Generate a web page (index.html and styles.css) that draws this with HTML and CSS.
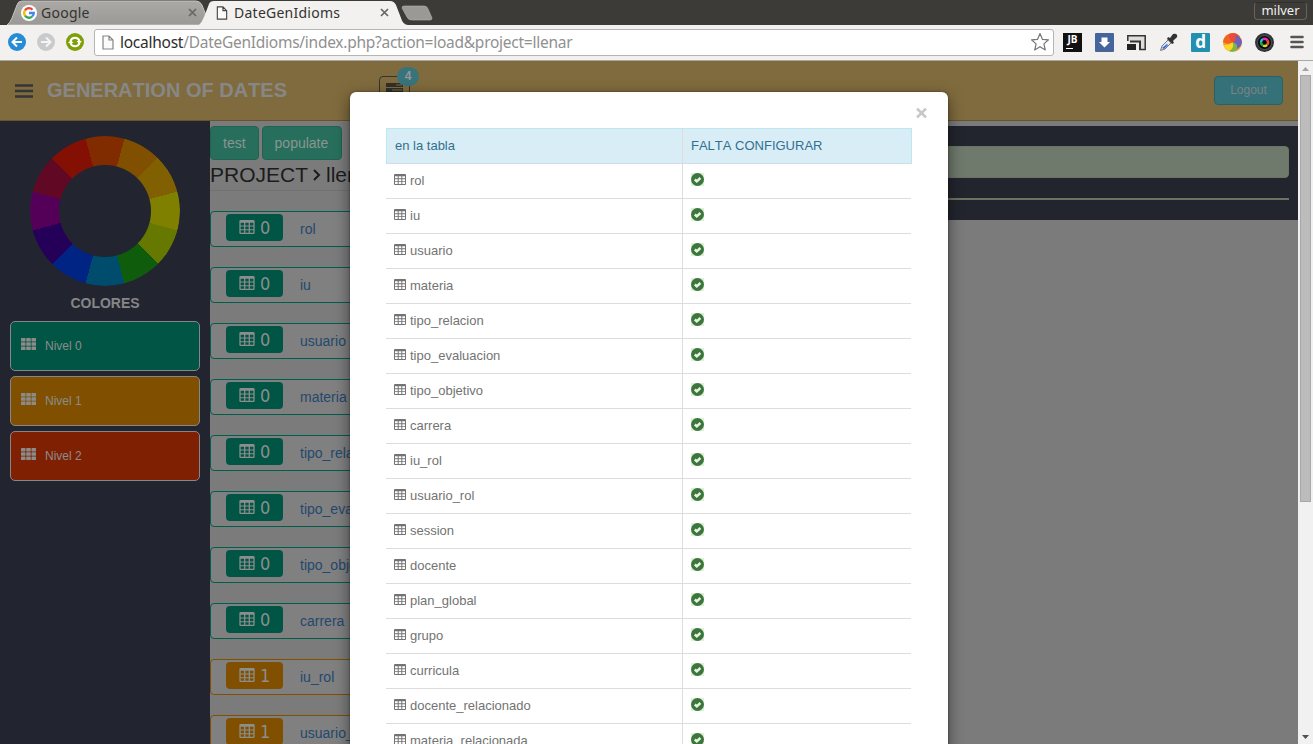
FILE: index.html
```html
<!DOCTYPE html>
<html lang="es">
<head>
<meta charset="utf-8">
<title>DateGenIdioms</title>
<link rel="stylesheet" href="styles.css">
</head>
<body>
<svg class="defs" aria-hidden="true">
  <symbol id="table" viewBox="0 0 12 11"><path fill="currentColor" fill-rule="evenodd" d="M1 0H11Q12 0 12 1V10Q12 11 11 11H1Q0 11 0 10V1Q0 0 1 0ZM1 2.200V4.300H3.700V2.200ZM4.700 2.200V4.300H7.300V2.200ZM8.300 2.200V4.300H11V2.200ZM1 5.200V7.200H3.700V5.200ZM4.700 5.200V7.200H7.300V5.200ZM8.300 5.200V7.200H11V5.200ZM1 8.100V10.100H3.700V8.100ZM4.700 8.100V10.100H7.300V8.100ZM8.300 8.100V10.100H11V8.100Z"/></symbol>
  <symbol id="grid" viewBox="0 0 15 12"><path fill="currentColor" d="M.6 0H4Q4.500 0 4.500.6V2.900Q4.500 3.500 4 3.500H.6Q0 3.500 0 2.900V.6Q0 0 .6 0ZM5.800 0H9.200Q9.800 0 9.800.6V2.900Q9.800 3.500 9.200 3.500H5.800Q5.200 3.500 5.200 2.900V.6Q5.200 0 5.800 0ZM11 0H14.400Q15 0 15 .6V2.900Q15 3.500 14.400 3.500H11Q10.500 3.500 10.500 2.900V.6Q10.500 0 11 0ZM.6 4.200H4Q4.500 4.200 4.500 4.800V7.200Q4.500 7.800 4 7.800H.6Q0 7.800 0 7.200V4.800Q0 4.200.6 4.200ZM5.800 4.200H9.200Q9.800 4.200 9.800 4.800V7.200Q9.800 7.800 9.200 7.800H5.800Q5.200 7.800 5.200 7.200V4.800Q5.200 4.200 5.800 4.200ZM11 4.200H14.400Q15 4.200 15 4.800V7.200Q15 7.800 14.400 7.800H11Q10.500 7.800 10.500 7.200V4.800Q10.500 4.200 11 4.200ZM.6 8.500H4Q4.500 8.500 4.500 9.100V11.400Q4.500 12 4 12H.6Q0 12 0 11.400V9.100Q0 8.500.6 8.500ZM5.800 8.500H9.200Q9.800 8.500 9.800 9.100V11.400Q9.800 12 9.200 12H5.800Q5.200 12 5.200 11.400V9.100Q5.200 8.500 5.800 8.500ZM11 8.500H14.400Q15 8.500 15 9.100V11.400Q15 12 14.400 12H11Q10.500 12 10.500 11.400V9.100Q10.500 8.500 11 8.500Z"/></symbol>
  <symbol id="check" viewBox="0 0 13 13"><path fill="#dff0d8" d="M0 0H13V13H0Z"/><circle cx="6.500" cy="6.500" r="6.500" fill="#3c763d"/><path d="M3.800 6.500L5.800 8.300L9.400 5" fill="none" stroke="#e6f3e1" stroke-width="2.500"/></symbol>
  <symbol id="file" viewBox="0 0 12 15"><path d="M1 1H7L11 5V14H1Z M7 1V5H11" fill="#fbfbfb" stroke="currentColor" stroke-width="1.200"/></symbol>
  <symbol id="close" viewBox="0 0 9 9"><path d="M1 1L8 8M8 1L1 8" stroke="currentColor" stroke-width="1.700"/></symbol>
</svg>
<div class="tabs">
  <svg class="tab-shapes" viewBox="0 0 440 25">
    <defs><linearGradient id="tg" x2="0" y2="1"><stop stop-color="#aaa9a6"/><stop offset="1" stop-color="#9b9996"/></linearGradient></defs>
    <path d="M7 25Q10 23 12 18L17 5Q18 1 22 1H196Q200 1 202 5L207 18Q209 24 214 25Z" fill="url(#tg)" stroke="#c5c3be"/>
    <path d="M199 25Q202 22 204 17L209 4Q210 1 214 1H390Q394 1 396 5L401 18Q403 25 408 25Z" fill="#f2f1f0"/>
    <path d="M404 6H424Q427 6 428 9L432 18Q432 20 430 20H412Q408 20 407 17L402 8Q402 6 404 6Z" fill="#9b9996" stroke="#b9b7b3" stroke-width=".6"/>
  </svg>
  <div class="tab tab-google">
    <svg class="favicon" viewBox="0 0 16 16"><circle cx="8" cy="8" r="8" fill="#fff"/><g fill="none" stroke-width="2.300"><path d="M4 5.300A4.800 4.800 0 0 1 11.500 4.700" stroke="#ea4335"/><path d="M4 5.300A4.800 4.800 0 0 0 4 10.700" stroke="#fbbc05"/><path d="M4 10.700A4.800 4.800 0 0 0 11.200 11.500" stroke="#34a853"/><path d="M11.200 11.500A4.800 4.800 0 0 0 12.800 8H8" stroke="#4285f4"/></g></svg>
    <span>Google</span><svg class="tab-x"><use href="#close"/></svg>
  </div>
  <div class="tab tab-active"><svg class="tab-file"><use href="#file"/></svg><span>DateGenIdioms</span><svg class="tab-x"><use href="#close"/></svg></div>
  <div class="user">milver</div>
</div>
<div class="toolbar">
  <svg class="nav" viewBox="0 0 18 18"><circle cx="9" cy="9" r="9" fill="#258cd6"/><path d="M14 9H5M9 4.500L4.500 9L9 13.500" fill="none" stroke="#fff" stroke-width="2"/></svg>
  <svg class="nav" viewBox="0 0 18 18"><circle cx="9" cy="9" r="9" fill="#c9cacb"/><path d="M4 9H13M9 4.500L13.500 9L9 13.500" fill="none" stroke="#f4f4f4" stroke-width="2"/></svg>
  <svg class="nav" viewBox="0 0 18 18"><circle cx="9" cy="9" r="9" fill="#7f9f08"/><path d="M4.500 8A4.700 4.700 0 0 1 13.500 8M4.500 10A4.700 4.700 0 0 0 13.500 10" fill="none" stroke="#fff" stroke-width="2"/><path d="M10.500 8H16L13.300 11ZM2 10H7.500L4.700 7Z" fill="#fff"/></svg>
  <div class="address"><svg class="url-file"><use href="#file"/></svg><span class="url"><b>localhost</b>/DateGenIdioms/index.php?action=load&amp;project=llenar</span>
    <svg class="star" viewBox="0 0 20 20"><path d="M10 1.500L12.400 7.300L18.500 7.800L13.900 11.900L15.300 18L10 14.700L4.700 18L6.100 11.900L1.500 7.800L7.600 7.300Z" fill="#fff" stroke="#777" stroke-width="1.200" stroke-linejoin="round"/></svg>
  </div>
  <div class="extensions">
    <div class="jb">JB<i></i></div>
    <svg viewBox="0 0 19 19"><rect width="19" height="19" rx="1" fill="#46659d"/><path d="M6.500 4.500H12.500V9H15L9.500 14.500L4 9H6.500Z" fill="#fff"/></svg>
    <svg viewBox="0 0 19 19"><path d="M.8 8V2.800H18.200V16.500H12" fill="#ddd" stroke="#333" stroke-width="1.500"/><path d="M1 8H14V16H1Z" fill="#eee"/><path d="M3 7.500H14V16H12V9.500H3Z" fill="#333"/><rect y="11" width="9" height="6" fill="#222"/></svg>
    <svg viewBox="0 0 19 19"><path d="M1.500 17.500L3 13L10 6L13 9L6 16Z" fill="#dce8f4" stroke="#777"/><path d="M3 15L8 11L9 12L5 16Z" fill="#3268e0"/><path d="M9 4L11 5L14 1Q17 0 18 2Q19 4 16 6L14 8L15 10L13 11L8 6Z" fill="#333"/></svg>
    <div class="letter-d">d</div>
    <svg viewBox="0 0 19 19"><circle cx="9.500" cy="9.500" r="9.500" fill="#f79a1c"/><path d="M9.500 9.500Q5 7 6 1Q13-2 17 4Q15 9 9.500 9.500Z" fill="#ee4a35"/><path d="M0 9Q1 3 6 1Q5 7 9.500 9.500Q5 12 0 9Z" fill="#ee6422"/><path d="M12 2Q19 4 19 9.500Q18 14 14 16Q15 11 10 9.500Q14 8 12 2Z" fill="#6b62ba"/><path d="M9.500 9.500Q15 10 14 17Q10 19.500 6 18Q11 15 9.500 9.500Z" fill="#77b84a"/><path d="M1 12Q6 12 9.500 9.500Q12 15 6 18Q2 17 1 12Z" fill="#fbd724"/></svg>
    <svg viewBox="0 0 19 19"><circle cx="9.500" cy="9.500" r="9.500" fill="#303438"/><circle cx="9.500" cy="9.500" r="7" fill="#05070b" stroke="#687078" stroke-width=".7"/><g fill="none" stroke-width="2.500"><path d="M6 9A3.700 3.700 0 0 1 8 6" stroke="#23c4e8"/><path d="M8 6A3.700 3.700 0 0 1 12.500 7.500" stroke="#e72bb0"/><path d="M12.500 7.500A3.700 3.700 0 0 1 12 12" stroke="#ef532b"/><path d="M12 12A3.700 3.700 0 0 1 8 12.500" stroke="#d9df20"/><path d="M8 12.500A3.700 3.700 0 0 1 6 9" stroke="#20a747"/></g></svg>
    <svg class="menu" viewBox="0 0 14 14"><path d="M1.500 2H12.500M1.500 7H12.500M1.500 12H12.500" stroke="#555" stroke-width="2.600" stroke-linecap="round"/></svg>
  </div>
</div>
<div class="viewport">
  <div class="page">
    <header class="header">
      <svg class="burger" viewBox="0 0 18 14"><path d="M0 1.500H18M0 7H18M0 12.500H18" stroke="#333638" stroke-width="2.700"/></svg>
      <div class="brand">GENERATION OF DATES</div>
      <div class="tasks"><svg viewBox="0 0 17 14"><path d="M0 0H17V4H0ZM0 5H17V9H0ZM0 10H17V14H0Z" fill="#30302a"/><path d="M10 2H16M6 7H16M12 12H16" stroke="#806b3e"/></svg><span>4</span></div>
      <div class="logout">Logout</div>
    </header>
    <div class="body">
      <aside class="sidebar">
        <div class="wheel"></div>
        <div class="wheel-title">COLORES</div>
        <div class="level green"><svg><use href="#grid"/></svg>Nivel 0</div>
        <div class="level amber"><svg><use href="#grid"/></svg>Nivel 1</div>
        <div class="level red"><svg><use href="#grid"/></svg>Nivel 2</div>
      </aside>
      <main class="main">
        <section class="project">
          <div class="actions"><div class="action">test</div><div class="action populate">populate</div></div>
          <div class="project-title">PROJECT <svg viewBox="0 0 8 12"><path d="M1 1L6 6L1 11" fill="none" stroke="currentColor" stroke-width="2"/></svg> llenar</div>
          <div class="entity"><div class="badge"><svg><use href="#table"/></svg>0</div>rol</div>
          <div class="entity"><div class="badge"><svg><use href="#table"/></svg>0</div>iu</div>
          <div class="entity"><div class="badge"><svg><use href="#table"/></svg>0</div>usuario</div>
          <div class="entity"><div class="badge"><svg><use href="#table"/></svg>0</div>materia</div>
          <div class="entity"><div class="badge"><svg><use href="#table"/></svg>0</div>tipo_relacion</div>
          <div class="entity"><div class="badge"><svg><use href="#table"/></svg>0</div>tipo_evaluacion</div>
          <div class="entity"><div class="badge"><svg><use href="#table"/></svg>0</div>tipo_objetivo</div>
          <div class="entity"><div class="badge"><svg><use href="#table"/></svg>0</div>carrera</div>
          <div class="entity one"><div class="badge"><svg><use href="#table"/></svg>1</div>iu_rol</div>
          <div class="entity one"><div class="badge"><svg><use href="#table"/></svg>1</div>usuario_rol</div>
        </section>
        <section class="result"><div class="alert"></div><div class="rule"></div></section>
      </main>
    </div>
    <div class="modal">
      <div class="modal-head"><svg viewBox="0 0 11 10"><path d="M1 .5L10 9.500M10 .5L1 9.500" stroke="#c8c8c8" stroke-width="2.600"/></svg></div>
      <div class="grid">
        <div class="row head"><div>en la tabla</div><div>FALTA CONFIGURAR</div></div>
        <div class="row"><div><svg class="ti"><use href="#table"/></svg>rol</div><div><svg class="ck"><use href="#check"/></svg></div></div>
        <div class="row"><div><svg class="ti"><use href="#table"/></svg>iu</div><div><svg class="ck"><use href="#check"/></svg></div></div>
        <div class="row"><div><svg class="ti"><use href="#table"/></svg>usuario</div><div><svg class="ck"><use href="#check"/></svg></div></div>
        <div class="row"><div><svg class="ti"><use href="#table"/></svg>materia</div><div><svg class="ck"><use href="#check"/></svg></div></div>
        <div class="row"><div><svg class="ti"><use href="#table"/></svg>tipo_relacion</div><div><svg class="ck"><use href="#check"/></svg></div></div>
        <div class="row"><div><svg class="ti"><use href="#table"/></svg>tipo_evaluacion</div><div><svg class="ck"><use href="#check"/></svg></div></div>
        <div class="row"><div><svg class="ti"><use href="#table"/></svg>tipo_objetivo</div><div><svg class="ck"><use href="#check"/></svg></div></div>
        <div class="row"><div><svg class="ti"><use href="#table"/></svg>carrera</div><div><svg class="ck"><use href="#check"/></svg></div></div>
        <div class="row"><div><svg class="ti"><use href="#table"/></svg>iu_rol</div><div><svg class="ck"><use href="#check"/></svg></div></div>
        <div class="row"><div><svg class="ti"><use href="#table"/></svg>usuario_rol</div><div><svg class="ck"><use href="#check"/></svg></div></div>
        <div class="row"><div><svg class="ti"><use href="#table"/></svg>session</div><div><svg class="ck"><use href="#check"/></svg></div></div>
        <div class="row"><div><svg class="ti"><use href="#table"/></svg>docente</div><div><svg class="ck"><use href="#check"/></svg></div></div>
        <div class="row"><div><svg class="ti"><use href="#table"/></svg>plan_global</div><div><svg class="ck"><use href="#check"/></svg></div></div>
        <div class="row"><div><svg class="ti"><use href="#table"/></svg>grupo</div><div><svg class="ck"><use href="#check"/></svg></div></div>
        <div class="row"><div><svg class="ti"><use href="#table"/></svg>curricula</div><div><svg class="ck"><use href="#check"/></svg></div></div>
        <div class="row"><div><svg class="ti"><use href="#table"/></svg>docente_relacionado</div><div><svg class="ck"><use href="#check"/></svg></div></div>
        <div class="row"><div><svg class="ti"><use href="#table"/></svg>materia_relacionada</div><div><svg class="ck"><use href="#check"/></svg></div></div>
      </div>
    </div>
  </div>
  <div class="scroll"><svg viewBox="0 0 7 4"><path d="M0 4L3.500 0L7 4Z" fill="#a3a3a3"/></svg><div class="thumb"></div><svg class="down" viewBox="0 0 7 4"><path d="M0 0L3.500 4L7 0Z" fill="#505050"/></svg></div>
</div>
</body>
</html>
```
FILE: styles.css
```css
* { box-sizing: border-box; }
body { margin: 0; width: 1313px; height: 744px; overflow: hidden; display: flex; flex-direction: column; font: 13px/20px "Liberation Sans", Arial, sans-serif; font-kerning: none; }
svg { display: block; flex: none; }
.defs { position: absolute; width: 0; height: 0; }

/* Browser chrome */
.tabs { position: relative; flex: none; height: 25px; display: flex; align-items: center; background: #3c3b37; color: #35332f; font: 14px/24px "Noto Sans", sans-serif; }
.tab-shapes { position: absolute; left: 0; top: 0; width: 440px; height: 25px; }
.tab { position: relative; display: flex; align-items: center; height: 25px; }
.tab span { flex: 1; white-space: nowrap; }
.tab-google { width: 197px; margin-right: 19px; padding-left: 21px; }
.tab-google span { margin-left: 4px; letter-spacing: .25px; }
.favicon { width: 16px; height: 16px; }
.tab-active { width: 173px; }
.tab-active span { margin-left: 6px; letter-spacing: .25px; }
.tab-file { width: 12px; height: 14px; color: #444; }
.tab-x { width: 9px; height: 9px; color: #686764; }
.user { margin: -4px 6px 0 auto; width: 53px; height: 18px; border: 1px solid #66645f; border-top-color: #302f2c; border-radius: 4px; background: #3d3c38; color: #f2f1f0; font-size: 13px; line-height: 15px; text-align: center; }
.toolbar { flex: none; height: 36px; display: flex; align-items: center; padding: 0 8px 1px; background: #f2f1f0; border-bottom: 1px solid #a9a8a6; }
.nav { width: 18px; height: 18px; margin-right: 11px; }
.address { width: 960px; height: 27px; margin-left: -1px; display: flex; align-items: center; background: #fff; border: 1px solid #b7b5b2; border-radius: 3px; padding: 0 3px 0 7px; }
.url-file { width: 12px; height: 15px; color: #858585; margin-right: 6px; }
.url { flex: 1; font: 15.500px/24px "Noto Sans", sans-serif; letter-spacing: -.26px; color: #91908f; white-space: nowrap; }
.url b { font-weight: 400; color: #2e2d2b; }
.star { width: 20px; height: 20px; }
.extensions { display: flex; align-items: center; gap: 13px; margin-left: 9px; }
.extensions > * { width: 19px; height: 19px; }
.extensions > .menu { width: 14px; height: 14px; margin-left: 3px; }
.jb { position: relative; background: #111; color: #fff; font: bold 10px/13px "Open Sans", sans-serif; text-align: center; }
.jb i { position: absolute; left: 3px; bottom: 3px; width: 7px; height: 1px; background: #fff; }
.letter-d { background: #2490b0; color: #fff; border-radius: 1px; font: bold 17px/17px "Noto Sans", sans-serif; text-align: center; }

/* Page */
.viewport { flex: 1; display: flex; min-height: 0; }
.page { position: relative; width: 1298px; background: #7b7b7b; overflow: hidden; display: flex; flex-direction: column; }
.header { flex: none; height: 60px; display: flex; align-items: center; background: #806b3e; border-bottom: 1px solid #69532b; padding: 0 15px; }
.burger { width: 18px; height: 14px; margin-top: 1px; }
.brand { width: 331px; margin: -2px 0 0 14px; font-size: 20px; font-weight: 700; color: #878787; white-space: nowrap; }
.tasks { position: relative; width: 31px; height: 29px; margin-left: 1px; border: 1px solid #333; border-radius: 4px; padding: 6px; }
.tasks svg { width: 17px; height: 14px; }
.tasks span { position: absolute; left: 17px; top: -10px; width: 22px; height: 19px; border-radius: 10px; background: #37747c; color: #969696; font-size: 12px; line-height: 19px; text-align: center; font-weight: 700; }
.logout { margin-left: auto; width: 69px; height: 29px; border: 1px solid #286169; border-radius: 4px; background: #347179; color: #7c8282; font-size: 12px; line-height: 26px; text-align: center; }
.body { flex: 1; display: flex; min-height: 0; }
.sidebar { width: 210px; flex: none; background: #22252f; padding: 15px 10px; }
.wheel { width: 150px; height: 150px; margin: 0 auto; border-radius: 50%; background: conic-gradient(from -15deg, #802b00 0 30deg, #805000 0 60deg, #806000 0 90deg, #808000 0 120deg, #667800 0 150deg, #0e5c0c 0 180deg, #004c6c 0 210deg, #002484 0 240deg, #240058 0 270deg, #540058 0 300deg, #600824 0 330deg, #841004 0); mask: radial-gradient(circle, transparent 45.500px, #000 46.500px); }
.wheel-title { margin: 7px 0 8px; text-align: center; color: #858687; font-weight: 700; font-size: 14px; }
.level { height: 50px; margin-bottom: 5px; display: flex; align-items: center; border: 1px solid #858687; border-radius: 5px; padding-left: 10px; color: #8b8d8b; font-size: 12px; }
.level svg { width: 15px; height: 12px; margin: -4px 9px 0 0; color: #8b8b89; }
.green { background: #005545; }
.amber { background: #805000; }
.red { background: #802003; }
.main { flex: 1; display: flex; min-width: 0; padding-top: 5px; }
.project { width: 538px; }
.actions { display: flex; gap: 3px; }
.action { height: 34px; padding: 0 12px; border: 1px solid #20634f; border-radius: 4px; background: #276f5c; color: #8a9590; font-size: 14px; line-height: 32px; }
.populate { width: 80px; }
.project-title { height: 31px; margin-bottom: 20px; display: flex; align-items: center; gap: 5px; border-bottom: 1px solid #717171; font-size: 21px; color: #1c1c1c; }
.project-title svg { width: 8px; height: 12px; }
.entity { height: 36px; margin-bottom: 20px; display: flex; align-items: center; background: #808080; border: 1px solid #005e4c; border-radius: 4px; padding-left: 15px; color: #24486d; font-size: 14px; }
.badge { width: 57px; height: 27px; margin: -4px 17px 0 0; padding-left: 13px; display: flex; align-items: center; gap: 5px; border-radius: 4px; background: #005545; color: #8c8e8c; font: 18px/27px "DejaVu Sans Condensed", "DejaVu Sans", sans-serif; }
.badge svg { width: 16px; height: 14px; }
.one { border-color: #805000; }
.one .badge { background: #805000; }
.result { flex: 1; height: 94px; background: #22252d; padding: 20px 9px 0 0; }
.alert { height: 32px; background: #6f796c; border-radius: 0 4px 4px 0; margin-bottom: 20px; border: 1px solid #6b7467; }
.rule { height: 2px; background: #6b7460; }

/* Dialog above the page */
.modal { position: absolute; left: 350px; top: 31px; width: 598px; height: 700px; background: #fff; border-radius: 6px 6px 0 0; box-shadow: 0 5px 15px rgba(0,0,0,.5), 0 0 2px rgba(0,0,0,.5); padding: 0 36px; }
.modal-head { height: 36px; display: flex; justify-content: flex-end; padding-top: 16px; margin-right: -15px; }
.modal-head svg { width: 11px; height: 10px; }
.row { height: 35px; display: grid; grid-template-columns: 297px 1fr; border-bottom: 1px solid #ddd; color: #737373; width: 525px; }
.row > div { display: flex; align-items: center; padding-left: 8px; }
.row > div:first-child { border-right: 1px solid #ddd; }
.head { height: 36px; width: 526px; background: #d9edf7; border: 1px solid #bce8f1; border-bottom-color: #ccdfe6; color: #31708f; grid-template-columns: 296px 1fr; }
.ti { width: 12px; height: 11px; margin: -3px 4px 0 0; }
.ck { width: 13px; height: 13px; margin-top: -3px; }

.scroll { width: 15px; background: #f1f1f1; display: flex; flex-direction: column; align-items: center; padding: 6px 0; }
.scroll svg { width: 7px; height: 4px; }
.thumb { width: 11px; height: 427px; margin-top: 4px; border: 1px solid #a8a8a8; background: #bcbcbc; }
.scroll .down { margin-top: auto; margin-bottom: -1px; }
```
